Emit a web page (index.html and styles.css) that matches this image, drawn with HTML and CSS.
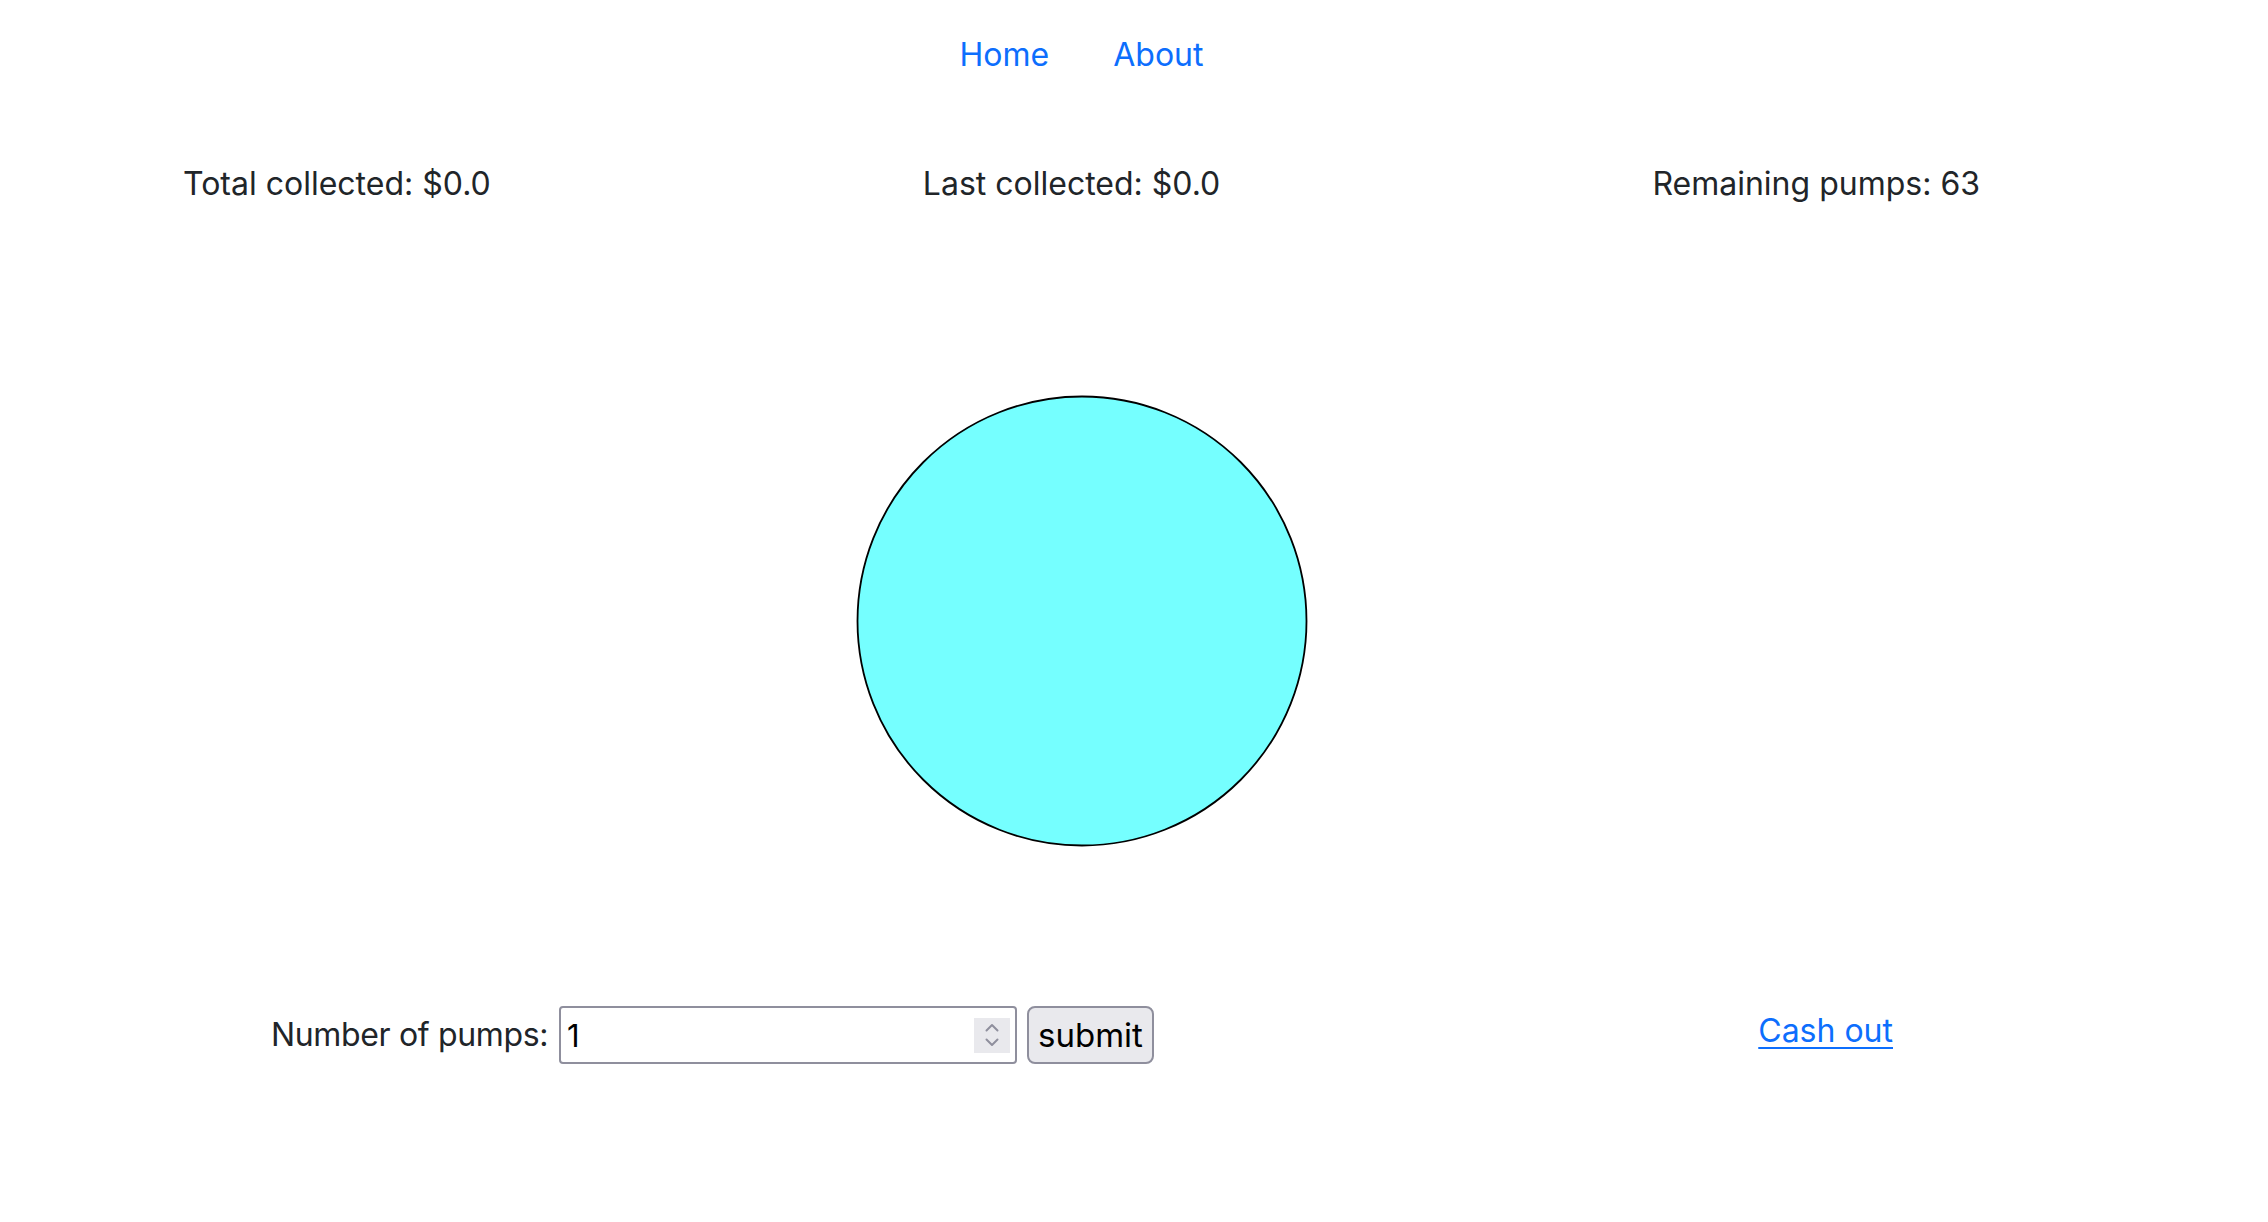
FILE: index.html
```html
<!DOCTYPE html>
<html lang="en">
<head>
<meta charset="utf-8">
<title>Balloon</title>
<link rel="stylesheet" href="styles.css">
</head>
<body>
<div class="page">
  <nav class="nav">
    <a class="nav-link" href="#">Home</a>
    <a class="nav-link" href="#">About</a>
  </nav>
  <div class="stats">
    <div class="stat">Total collected: $0.0</div>
    <div class="stat">Last collected: $0.0</div>
    <div class="stat">Remaining pumps: 63</div>
  </div>
  <div class="stage">
    <svg class="balloon" width="452" height="452" viewBox="0 0 452 452">
      <circle cx="226" cy="226" r="224.5" fill="#75ffff" stroke="#000" stroke-width="1.8"/>
    </svg>
  </div>
  <div class="controls">
    <form class="pump-form">
      <label class="pump-label" for="pumps">Number of pumps:</label>
      <div class="number-box">
        <input class="number-input" id="pumps" type="text" value="1">
        <span class="spinner">
          <svg width="16" height="28" viewBox="0 0 16 28">
            <path d="M2.5 9.5 L8 4 L13.5 9.5" fill="none" stroke="#8f8f9d" stroke-width="2" stroke-linecap="round" stroke-linejoin="round"/>
            <path d="M2.5 18.5 L8 24 L13.5 18.5" fill="none" stroke="#8f8f9d" stroke-width="2" stroke-linecap="round" stroke-linejoin="round"/>
          </svg>
        </span>
      </div>
      <button class="submit-btn" type="button">submit</button>
    </form>
    <a class="cash-out" href="#">Cash out</a>
  </div>
</div>
</body>
</html>
```
FILE: styles.css
```css
html, body {
  margin: 0;
  padding: 0;
  background: #ffffff;
}
body {
  font-family: Inter, "Noto Sans", sans-serif;
  font-size: 32px;
  line-height: 48px;
  color: #212529;
}
.page {
  width: 2163px;
}
.nav {
  display: flex;
  justify-content: center;
  padding-top: 31px;
}
.nav-link {
  padding: 0 32px;
  color: #0d6efd;
  text-decoration: none;
}
.stats {
  display: flex;
  justify-content: space-between;
  padding: 0 183px;
  margin-top: 81px;
}
.stage {
  display: flex;
  justify-content: center;
  margin-top: 187px;
}
.balloon {
  display: block;
}
.controls {
  display: flex;
  justify-content: space-between;
  align-items: flex-start;
  padding: 0 270px 0 271px;
  margin-top: 159px;
}
.pump-form {
  display: flex;
  align-items: center;
  margin: 0;
}
.pump-label {
  margin-right: 11px;
  letter-spacing: -0.35px;
}
.number-box {
  box-sizing: border-box;
  width: 458px;
  height: 58px;
  border: 2px solid #8f8f9d;
  border-radius: 4px;
  display: flex;
  align-items: center;
  padding: 0 5px 0 6px;
  background: #fff;
}
.number-input {
  flex: 1;
  min-width: 0;
  border: none;
  outline: none;
  padding: 0;
  margin: 0;
  font-family: Inter, "Noto Sans", sans-serif;
  font-size: 31px;
  color: #000;
  background: transparent;
}
.spinner {
  width: 36px;
  height: 35px;
  background: #e9e9ed;
  display: flex;
  align-items: center;
  justify-content: center;
}
.spinner svg {
  display: block;
}
.submit-btn {
  box-sizing: border-box;
  height: 58px;
  margin-left: 10px;
  padding: 0 9px;
  border: 2px solid #8f8f9d;
  border-radius: 8px;
  background: #e9e9ed;
  color: #000;
  font-family: Inter, "Noto Sans", sans-serif;
  font-size: 33px;
  line-height: 1;
}
.cash-out {
  color: #0d6efd;
  text-decoration: underline;
  text-underline-offset: 5px;
  text-decoration-thickness: 2px;
  line-height: 48px;
  margin-top: 1px;
}
```
